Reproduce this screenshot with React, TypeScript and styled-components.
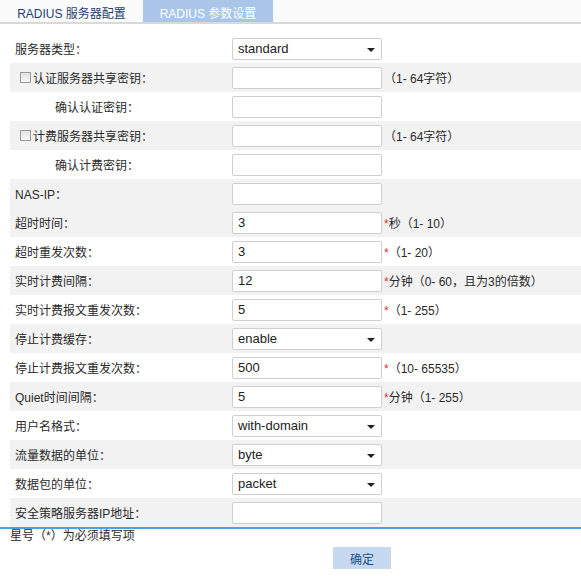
import React from "react";
import styled, { createGlobalStyle } from "styled-components";

const Global = createGlobalStyle`
  html, body { margin: 0; padding: 0; background: #fff; }
  body { font-family: Arial, "Liberation Sans", "Noto Sans CJK SC", sans-serif; color: #333; }
`;

const Page = styled.div`
  width: 581px;
  height: 576px;
  position: relative;
  overflow: hidden;
`;

const TabBar = styled.div`
  display: flex;
  height: 22px;
  border-bottom: 2px solid #d9d9d9;
  background: #fbfbfb;
`;

const Tab = styled.div<{ $active?: boolean }>`
  width: ${(p) => (p.$active ? "130px" : "140px")};
  margin-left: ${(p) => (p.$active ? "3px" : "0")};
  display: flex;
  align-items: center;
  justify-content: center;
  font-size: 12px;
  font-family: "Liberation Sans", "Noto Sans CJK SC", sans-serif;
  background: ${(p) => (p.$active ? "#a9c6e8" : "transparent")};
  color: ${(p) => (p.$active ? "#ffffff" : "#1f3f6e")};
  padding-top: 2px;
  padding-left: ${(p) => (p.$active ? "0" : "3px")};
  box-sizing: border-box;
`;

const Form = styled.div`
  margin-top: 10px;
  padding-left: 10px;
  border-bottom: 2px solid #4aa3df;
`;

const Row = styled.div<{ $shade?: boolean }>`
  height: 29px;
  display: flex;
  align-items: center;
  background: ${(p) => (p.$shade ? "#f2f2f2" : "#ffffff")};
`;

const Label = styled.div<{ $indent?: number }>`
  width: ${(p) => 222 - (p.$indent ?? 5)}px;
  padding-left: ${(p) => p.$indent ?? 5}px;
  display: flex;
  align-items: center;
  font-size: 12px;
  font-family: "Liberation Sans", "Noto Sans CJK SC", sans-serif;
  color: #2a2a2a;
`;

const Check = styled.span`
  width: 11px;
  height: 11px;
  border: 1px solid #9a9a9a;
  background: linear-gradient(#e2e2e2, #f8f8f8);
  margin-right: 2px;
  box-sizing: border-box;
  display: inline-block;
`;

const Field = styled.div`
  width: 150px;
  height: 22px;
  box-sizing: border-box;
  border: 1px solid #cfcfcf;
  border-radius: 2px;
  background: #fff;
  display: flex;
  align-items: center;
  padding: 0 5px;
  font-size: 13px;
  font-family: Arial, "Liberation Sans", sans-serif;
  color: #222;
  position: relative;
`;

const Caret = styled.span`
  position: absolute;
  right: 6px;
  top: 9px;
  width: 0;
  height: 0;
  border-left: 4px solid transparent;
  border-right: 4px solid transparent;
  border-top: 4px solid #222;
`;

const Hint = styled.span`
  margin-left: 2px;
  font-size: 12px;
  font-family: "Liberation Sans", "Noto Sans CJK SC", sans-serif;
  color: #2a2a2a;
`;

const Star = styled.span`
  color: #e0303a;
`;

const Note = styled.div`
  padding-left: 10px;
  line-height: 14px;
  font-size: 12px;
  font-family: "Liberation Sans", "Noto Sans CJK SC", sans-serif;
  color: #2a2a2a;
`;

const ButtonRow = styled.div`
  display: flex;
  padding-left: 333px;
  margin-top: 4px;
`;

const Button = styled.div`
  width: 58px;
  height: 22px;
  background: #c6d9f0;
  color: #1f4e8c;
  font-size: 12px;
  font-family: "Liberation Sans", "Noto Sans CJK SC", sans-serif;
  display: flex;
  align-items: center;
  justify-content: center;
`;

type RowDef = {
  label: string;
  shade: boolean;
  check?: boolean;
  indent?: number;
  value?: string;
  select?: boolean;
  star?: boolean;
  hint?: string;
};

const rows: RowDef[] = [
  { label: "服务器类型：", shade: false, value: "standard", select: true },
  { label: "认证服务器共享密钥：", shade: true, check: true, indent: 10, hint: "（1- 64字符）" },
  { label: "确认认证密钥：", shade: false, indent: 45 },
  { label: "计费服务器共享密钥：", shade: true, check: true, indent: 10, hint: "（1- 64字符）" },
  { label: "确认计费密钥：", shade: false, indent: 45 },
  { label: "NAS-IP：", shade: true },
  { label: "超时时间：", shade: true, value: "3", star: true, hint: "秒（1- 10）" },
  { label: "超时重发次数：", shade: false, value: "3", star: true, hint: "（1- 20）" },
  { label: "实时计费间隔：", shade: true, value: "12", star: true, hint: "分钟（0- 60，且为3的倍数）" },
  { label: "实时计费报文重发次数：", shade: false, value: "5", star: true, hint: "（1- 255）" },
  { label: "停止计费缓存：", shade: true, value: "enable", select: true },
  { label: "停止计费报文重发次数：", shade: false, value: "500", star: true, hint: "（10- 65535）" },
  { label: "Quiet时间间隔：", shade: true, value: "5", star: true, hint: "分钟（1- 255）" },
  { label: "用户名格式：", shade: false, value: "with-domain", select: true },
  { label: "流量数据的单位：", shade: true, value: "byte", select: true },
  { label: "数据包的单位：", shade: false, value: "packet", select: true },
  { label: "安全策略服务器IP地址：", shade: true },
];

export default function App() {
  return (
    <Page>
      <Global />
      <TabBar>
        <Tab>RADIUS 服务器配置</Tab>
        <Tab $active>RADIUS 参数设置</Tab>
      </TabBar>
      <Form>
        {rows.map((r, i) => (
          <Row key={i} $shade={r.shade}>
            <Label $indent={r.indent}>
              {r.check && <Check />}
              {r.label}
            </Label>
            <Field>
              {r.value}
              {r.select && <Caret />}
            </Field>
            {(r.star || r.hint) && (
              <Hint>
                {r.star && <Star>*</Star>}
                {r.hint}
              </Hint>
            )}
          </Row>
        ))}
      </Form>
      <Note>星号（*）为必须填写项</Note>
      <ButtonRow>
        <Button>确定</Button>
      </ButtonRow>
    </Page>
  );
}
